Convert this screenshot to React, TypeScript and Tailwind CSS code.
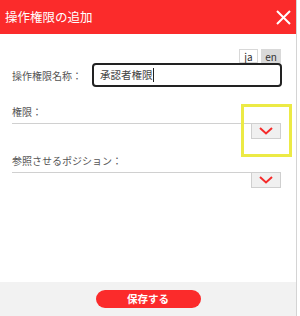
import React from "react";

const font = { fontFamily: '"Noto Sans CJK JP", "Liberation Sans", sans-serif' };

function Chevron() {
  return (
    <svg width="14" height="8" viewBox="0 0 14 8" fill="none">
      <path d="M1 1 L7 6.5 L13 1" stroke="#f52a2a" strokeWidth="2" />
    </svg>
  );
}

function SelectRow({ label }: { label: string }) {
  return (
    <div className="flex flex-col">
      <div className="h-[22px] text-[10px] text-[#555] leading-[22px] pl-[12px]">{label}</div>
      <div className="flex ml-[12px] mr-[15px] border-t border-[#d0d0d0]">
        <div className="flex-1" />
        <div className="w-[30px] h-[15px] bg-[#f0f0f0] border border-[#cfcfcf] border-t-0 flex items-center justify-center">
          <Chevron />
        </div>
      </div>
    </div>
  );
}

export default function App() {
  return (
    <div className="w-[300px] h-[316px] bg-white flex" style={font}>
      <div className="w-[297px] h-full border-r border-[#d4d4d4] flex flex-col">
        {/* header */}
        <div className="h-[34px] bg-[#fb2b2b] flex items-center justify-between pl-[5px] pr-[5px]">
          <span className="text-white text-[12.5px]">操作権限の追加</span>
          <svg width="15" height="15" viewBox="0 0 15 15">
            <path d="M1 1 L14 14 M14 1 L1 14" stroke="white" strokeWidth="2" />
          </svg>
        </div>

        {/* body */}
        <div className="flex-1 relative flex flex-col">
          <div className="flex justify-end gap-[3px] pr-[15px] pt-[15px] text-[10px]">
            <div className="w-[19px] h-[14px] border border-[#d8d8d8] flex items-center justify-center text-[#333]">ja</div>
            <div className="w-[20px] h-[14px] bg-[#d9d9d9] flex items-center justify-center text-[#333]">en</div>
          </div>
          <div className="flex items-center pr-[14px]">
            <div className="w-[92px] pl-[12px] text-[10px] text-[#555]">操作権限名称：</div>
            <div className="flex-1 h-[24px] border-2 border-[#222] rounded-[4px] flex items-center pl-[6px] text-[10.5px] text-[#444]">
              承認者権限<span className="w-px h-[14px] bg-[#222]" />
            </div>
          </div>
          <div className="h-[14px]" />
          <SelectRow label="権限：" />
          <div className="h-[11px]" />
          <SelectRow label="参照させるポジション：" />

          <div className="absolute left-[241px] top-[70px] w-[51px] h-[53px] border-[3px] border-[#ecea45]" />
        </div>

        {/* footer */}
        <div className="h-[34px] bg-[#f2f2f2] flex items-center justify-center">
          <button className="w-[105px] h-[18px] rounded-full bg-[#fb2b2b] text-white text-[10.5px] font-bold flex items-center justify-center">
            保存する
          </button>
        </div>
      </div>
    </div>
  );
}
